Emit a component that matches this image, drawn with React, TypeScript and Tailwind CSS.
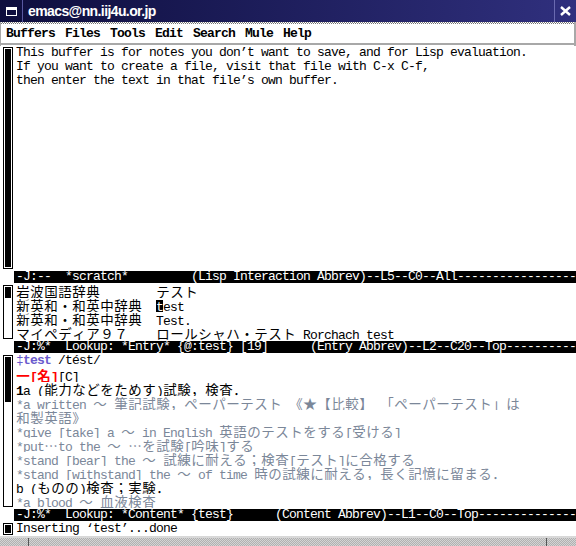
import React from 'react';

const mono = "font-['Liberation_Mono',monospace] text-[13px] tracking-[-0.8px]";
const cjk = "font-['Noto_Sans_CJK_JP',sans-serif] text-[13.5px] tracking-normal";
const gray = 'text-[#7b8799]';

// wide (double column) glyphs get a 14px cell, like the X bitmap fonts
function isWide(ch: string) {
  const n = ch.codePointAt(0) ?? 0;
  return n >= 0x2000 && n !== 0x2018 && n !== 0x2019;
}

function T({ s, className = '' }: { s: string; className?: string }) {
  const out: React.ReactNode[] = [];
  let buf = '';
  let k = 0;
  const flush = () => {
    if (buf) {
      out.push(<span key={k++}>{buf}</span>);
      buf = '';
    }
  };
  for (const ch of Array.from(s)) {
    if (isWide(ch)) {
      flush();
      out.push(
        <span key={k++} className={`inline-block w-[14px] text-center ${cjk}`}>
          {ch}
        </span>
      );
    } else {
      buf += ch;
    }
  }
  flush();
  return <span className={className}>{out}</span>;
}

function Row({ children }: { children: React.ReactNode }) {
  return <div className="h-[14px] leading-[14px] whitespace-pre overflow-hidden">{children}</div>;
}

interface WindowProps {
  height: string;
  thumb: string;
  children: React.ReactNode;
}

function Window({ height, thumb, children }: WindowProps) {
  return (
    <div className={`flex ${height}`}>
      {/* scroll bar */}
      <div className="w-[16px] shrink-0 pl-[3px] py-[1px]">
        <div className="h-full w-[10px] border border-black p-[1px]">
          <div className={`bg-black ${thumb}`} />
        </div>
      </div>
      <div className="flex-1 min-w-0">{children}</div>
    </div>
  );
}

function ModeLine({ s }: { s: string }) {
  return (
    <div className="h-[14px] pl-[14px] py-[1px]">
      <div className="h-[12px] bg-black text-white pl-[2px] leading-[12px] whitespace-pre overflow-hidden">
        {s + '-'.repeat(60)}
      </div>
    </div>
  );
}

const menus = ['Buffers', 'Files', 'Tools', 'Edit', 'Search', 'Mule', 'Help'];

export default function App() {
  return (
    <div className={`w-[576px] h-[546px] bg-white text-black overflow-hidden flex flex-col ${mono}`}>
      {/* Title bar */}
      <div className="h-[22px] flex bg-linear-to-r from-[#0e0e3e] to-[#30307e]">
        <div className="w-[23px] border-r border-[#5858a0] flex items-center justify-center">
          <div className="w-[11px] h-[9px] border border-white border-t-[3px]" />
        </div>
        <div className="flex-1 pl-[5px] text-white font-bold text-[14px] tracking-[-0.6px] leading-[22px] font-['Liberation_Sans',sans-serif]">
          emacs@nn.iij4u.or.jp
        </div>
        <div className="w-[22px] border-l border-[#6a6ab0] flex items-center justify-center">
          <svg width="11" height="10" viewBox="0 0 11 10">
            <path d="M1 1 L10 9 M10 1 L1 9" stroke="white" strokeWidth="2.4" />
          </svg>
        </div>
      </div>

      {/* Menu bar */}
      <div className="h-[24px] flex flex-col border-l border-r-2 border-[#a8a8a8]">
        <div className="h-[2px] bg-[conic-gradient(#777_25%,#fff_0_50%,#777_0_75%,#fff_0)] bg-size-[2px_2px]" />
        <div className="h-[19px] flex items-center gap-[10px] pl-[5px] font-bold">
          {menus.map((m) => (
            <span key={m}>{m}</span>
          ))}
        </div>
        <div className="h-[2px] bg-[#a8a8a8]" />
        <div className="h-[1px]" />
      </div>

      {/* *scratch* */}
      <Window height="h-[224px]" thumb="h-full">
        <Row>
          <T s="This buffer is for notes you don’t want to save, and for Lisp evaluation." />
        </Row>
        <Row>
          <T s="If you want to create a file, visit that file with C-x C-f," />
        </Row>
        <Row>
          <T s="then enter the text in that file’s own buffer." />
        </Row>
      </Window>
      <ModeLine s="-J:--  *scratch*         (Lisp Interaction Abbrev)--L5--C0--All" />

      {/* dictionaries */}
      <Window height="h-[56px]" thumb="h-[11px]">
        <Row>
          <T s="岩波国語辞典        テスト" />
        </Row>
        <Row>
          <T s="新英和・和英中辞典  " />
          <span className="bg-black text-white">t</span>
          <T s="est" />
        </Row>
        <Row>
          <T s="新英和・和英中辞典  Test." />
        </Row>
        <Row>
          <T s="マイペディア９７    ロールシャハ・テスト Rorchach test" />
        </Row>
      </Window>
      <ModeLine s="-J:%*  Lookup: *Entry* {@:test} [19]      (Entry Abbrev)--L2--C20--Top" />

      {/* entry content */}
      <Window height="h-[154px]" thumb="h-[45px]">
        <Row>
          <span className="text-[#6a5acd]">‡</span>
          <span className="text-[#6a5acd] font-bold">test</span>
          <T s=" /tést/" />
        </Row>
        <Row>
          <T s="一[名]" className="text-[#ff0000] font-bold" />
          <T s="[C]" />
        </Row>
        <Row>
          <span className="font-bold">1</span>
          <T s="a (能力などをためす)試験，検査．" />
        </Row>
        <Row>
          <T s="*a written ～ 筆記試験，ペーパーテスト 《★【比較】 「ペーパーテスト」は" className={gray} />
        </Row>
        <Row>
          <T s="和製英語》" className={gray} />
        </Row>
        <Row>
          <T s="*give [take] a ～ in English 英語のテストをする[受ける]" className={gray} />
        </Row>
        <Row>
          <T s="*put…to the ～ …を試験[吟味]する" className={gray} />
        </Row>
        <Row>
          <T s="*stand [bear] the ～ 試練に耐える；検査[テスト]に合格する" className={gray} />
        </Row>
        <Row>
          <T s="*stand [withstand] the ～ of time 時の試練に耐える，長く記憶に留まる．" className={gray} />
        </Row>
        <Row>
          <T s="b (ものの)検査；実験．" />
        </Row>
        <Row>
          <T s="*a blood ～ 血液検査" className={gray} />
        </Row>
      </Window>
      <ModeLine s="-J:%*  Lookup: *Content* {test}      (Content Abbrev)--L1--C0--Top" />

      {/* echo area */}
      <Window height="h-[14px]" thumb="h-full">
        <Row>
          <T s="Inserting ‘test’...done" />
        </Row>
      </Window>

      {/* bottom status strip */}
      <div className="h-[10px] flex border-t-2 border-[#d8d8d8] bg-[conic-gradient(#b0b0b0_25%,#d4d4d4_0_50%,#b0b0b0_0_75%,#d4d4d4_0)] bg-size-[2px_2px]">
        <div className="w-[29px] border-r border-[#555]" />
        <div className="flex-1 border-r border-[#555]" />
        <div className="w-[29px]" />
      </div>
    </div>
  );
}
